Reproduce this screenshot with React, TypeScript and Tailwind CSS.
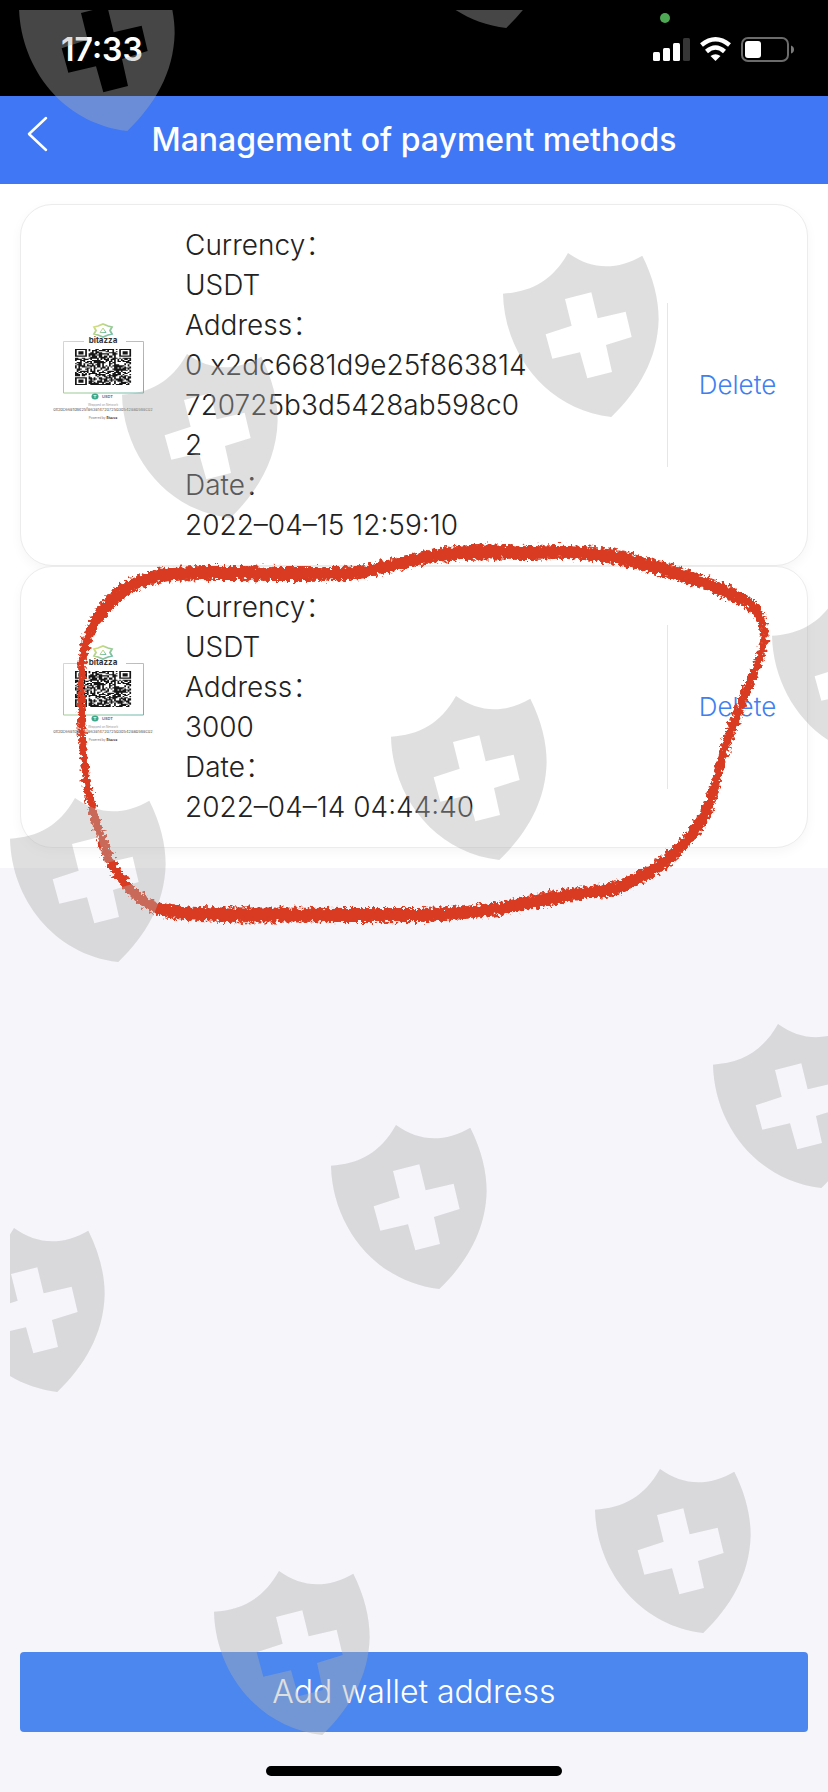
import React from 'react';

interface PaymentMethod {
  currency: string;
  address: string;
  date: string;
}

const METHODS: PaymentMethod[] = [
  {
    currency: 'USDT',
    address: '0 x2dc6681d9e25f863814720725b3d5428ab598c02',
    date: '2022–04–15 12:59:10',
  },
  { currency: 'USDT', address: '3000', date: '2022–04–14 04:44:40' },
];

// Top left corner of every shield in the repeated mark
const SHIELDS = [
  [19, -33],
  [398, -136],
  [503, 253],
  [122, 354],
  [772, 595],
  [391, 696],
  [10, 798],
  [713, 1024],
  [331, 1125],
  [-51, 1228],
  [595, 1469],
  [214, 1571],
];

// x, y and brush width along the marker line
const MARKER = [
  [173, 573, 13], [230, 572, 13], [283, 573, 13], [353, 572, 12], [383, 566, 12], [414, 559, 12],
  [447, 553, 13], [487, 551, 14], [530, 552, 13], [567, 551, 13], [614, 556, 13], [661, 568, 13],
  [701, 581, 12], [734, 595, 12], [751, 605, 10], [762, 624, 7], [763, 641, 7], [756, 664, 7],
  [747, 686, 8], [731, 727, 8], [720, 760, 7], [713, 787, 8], [704, 813, 10], [687, 838, 11],
  [667, 858, 11], [641, 875, 12], [611, 888, 12], [574, 893, 12], [541, 899, 13], [501, 907, 12],
  [457, 912, 12], [414, 914, 13], [350, 914, 13], [267, 914, 14], [200, 913, 13], [163, 909, 12],
  [140, 898, 10], [123, 880, 9], [109, 860, 9], [97, 827, 7], [88, 793, 7], [83, 757, 6],
  [81, 727, 6], [80, 690, 6], [82, 657, 7], [88, 633, 9], [103, 608, 12], [123, 589, 12],
  [147, 578, 12],
];

const spline = (a: number, b: number, c: number, d: number, t: number) =>
  0.5 * (2 * b + (c - a) * t + (2 * a - 5 * b + 4 * c - d) * t * t + (3 * b - a - 3 * c + d) * t * t * t);

const markerPath = () => {
  const n = MARKER.length;
  const outer: string[] = [];
  const inner: string[] = [];
  const at = (i: number, t: number, k: number) =>
    spline(MARKER[(i + n - 1) % n][k], MARKER[i % n][k], MARKER[(i + 1) % n][k], MARKER[(i + 2) % n][k], t);
  for (let i = 0; i < n; i++) {
    for (let s = 0; s < 6; s++) {
      const t = s / 6;
      const x = at(i, t, 0);
      const y = at(i, t, 1);
      const half = at(i, t, 2) / 2;
      const dx = at(i, t + 0.01, 0) - x;
      const dy = at(i, t + 0.01, 1) - y;
      const len = Math.hypot(dx, dy) || 1;
      const nx = (dy / len) * half;
      const ny = (-dx / len) * half;
      outer.push(`${(x + nx).toFixed(1)} ${(y + ny).toFixed(1)}`);
      inner.push(`${(x - nx).toFixed(1)} ${(y - ny).toFixed(1)}`);
    }
  }
  return `M${outer.join('L')}ZM${inner.join('L')}Z`;
};

const QR_SIZE = 33;

const qrPath = () => {
  let seed = 20220415;
  let d = '';
  const finder = (x: number, y: number) => {
    for (const [ox, oy] of [[0, 0], [QR_SIZE - 7, 0], [0, QR_SIZE - 7]]) {
      const fx = x - ox;
      const fy = y - oy;
      if (fx >= -1 && fx <= 7 && fy >= -1 && fy <= 7) {
        const ring = Math.max(Math.abs(fx - 3), Math.abs(fy - 3));
        return ring === 3 || ring <= 1;
      }
    }
    return null;
  };
  for (let y = 0; y < QR_SIZE; y++) {
    for (let x = 0; x < QR_SIZE; x++) {
      seed = (seed * 1103515245 + 12345) % 2147483648;
      const fixed = finder(x, y);
      if (fixed === null ? seed / 2147483648 > 0.42 : fixed) d += `M${x} ${y}h1v1h-1z`;
    }
  }
  return d;
};

const MARKER_PATH = markerPath();
const QR_PATH = qrPath();

const StatusBar: React.FC = () => (
  <div className="flex h-24 flex-none items-start justify-between bg-black pt-2 pr-[34px] pl-[61px] text-white">
    <span className="pt-6 text-[32px] leading-9 font-semibold">17:33</span>
    <svg width="142" height="56" viewBox="652 8 142 56" fill="none" aria-hidden="true">
      <circle cx="665" cy="18" r="5" fill="#4ea954" />
      <g fill="#fff">
        <rect x="653" y="52" width="7" height="9" rx="1.5" />
        <rect x="663" y="48" width="7" height="13" rx="1.5" />
        <rect x="673" y="43" width="7" height="18" rx="1.5" />
        <rect x="683" y="38" width="7" height="23" rx="1.5" fill="#363636" />
        <path d="M715.500 61 L710.500 56 Q715.500 52.500 720.500 56 Z" />
      </g>
      <path d="M701.500 45 Q715.500 33.500 729.500 45" stroke="#fff" strokeWidth="4.500" />
      <path d="M706.500 51.500 Q715.500 43.500 724.500 51.500" stroke="#fff" strokeWidth="4.500" />
      <rect x="742" y="38" width="46" height="23" rx="6" stroke="#6b6b6b" strokeWidth="2" />
      <rect x="745" y="41" width="16" height="17" rx="3" fill="#fff" />
      <path d="M791 45.500 Q794 46.500 794 49.500 Q794 52.500 791 53.500 Z" fill="#7a7a7a" />
    </svg>
  </div>
);

const WalletImage: React.FC<{ id: string }> = ({ id }) => (
  <svg width="110" height="130" viewBox="48 320 110 130" role="img" aria-label="Wallet QR code">
    <defs>
      <linearGradient id={`edge-${id}`} x1="0" y1="0" x2="1" y2="1">
        <stop offset="0" stopColor="#dfe477" />
        <stop offset="1" stopColor="#69b7ae" />
      </linearGradient>
    </defs>
    <g fill="none" stroke={`url(#edge-${id})`}>
      <path d="M84 341.500H63.500V393H143.500V341.500H126" />
      <path d="M98 326L103 324L108 326L112 327L110 330.500L112 334L108 335L103 337L98 335L94 334L96 330.500L94 327Z" strokeWidth="1.800" />
      <path d="M103 328L106 332.500H100Z" />
    </g>
    <text x="103" y="343" textAnchor="middle" fontSize="8" fontWeight="700" fill="#333">bitazza</text>
    <path d={QR_PATH} transform="translate(75 349) scale(1.700 1.090)" fill="#151515" />
    <ellipse cx="95" cy="396.500" rx="3.500" ry="3" fill="#3da78a" />
    <path d="M93.500 395.500h3M95 395.500v2.500" stroke="#fff" strokeWidth=".7" />
    <text x="102" y="398" fontSize="4" fontWeight="600" fill="#666">USDT</text>
    <text x="103" y="406" textAnchor="middle" fontSize="3" fill="#999">Wrapped on Network</text>
    <text x="103" y="411" textAnchor="middle" fontSize="4" fill="#555">0x2dc6681d9e25f863814720725b3d5428ab598c02</text>
    <text x="103" y="419" textAnchor="middle" fontSize="3" fill="#777">Powered by <tspan fontWeight="700" fill="#333">Bitazza</tspan></text>
  </svg>
);

const MethodCard: React.FC<{ method: PaymentMethod; id: string }> = ({ method, id }) => (
  <li className="flex items-center rounded-[32px] border border-[#ececec] bg-white py-5 pl-[27px] shadow-[0_4px_12px_rgba(0,0,0,0.04)]">
    <div className="flex-none">
      <WalletImage id={id} />
    </div>
    <dl className="ml-[27px] w-[346px] text-[28px] leading-10 font-light break-all text-[#222]">
      <dt>Currency：</dt>
      <dd>{method.currency}</dd>
      <dt>Address：</dt>
      <dd>{method.address}</dd>
      <dt>Date：</dt>
      <dd>{method.date}</dd>
    </dl>
    <div className="ml-auto flex h-[164px] w-[140px] flex-none items-center justify-center border-l border-[#e6e6e6]">
      <button type="button" className="text-[26px] leading-9 font-light text-[#3f7ff0]">Delete</button>
    </div>
  </li>
);

const ShieldMarks: React.FC = () => (
  <div className="pointer-events-none absolute top-2.5 right-0 bottom-0 left-2.5 overflow-hidden" aria-hidden="true">
    <svg width="100%" height="100%" fill="#afafaf" fillOpacity="0.4">
      {SHIELDS.map(([x, y]) => (
        <path
          key={`${x}-${y}`}
          transform={`translate(${x - 10} ${y - 10}) scale(.3333) translate(-62 -46)`}
          fillRule="evenodd"
          d="M62 168C145 163 210 130 257 46C325 95 400 100 480 54C513 120 529 185 529 245C526 365 468 460 387 538C190 515 66 345 62 168ZM248 184L327 164L346 242L430 222L448 298L371 322L389 403L315 422L293 344L210 363L190 290L268 264Z"
        />
      ))}
    </svg>
  </div>
);

const MarkerLine: React.FC = () => (
  <svg className="pointer-events-none absolute top-0 left-0" width="828" height="960" aria-hidden="true">
    <defs>
      <filter id="crayon" x="-5%" y="-5%" width="110%" height="110%">
        <feTurbulence type="fractalNoise" baseFrequency="0.28" numOctaves="3" seed="4" result="noise" />
        <feDisplacementMap in="SourceGraphic" in2="noise" scale="10" xChannelSelector="R" yChannelSelector="G" result="rough" />
        <feGaussianBlur in="rough" stdDeviation="0.5" />
      </filter>
    </defs>
    <path
      d={MARKER_PATH}
      fill="#d93a20"
      fillRule="evenodd"
      stroke="#d93a20"
      filter="url(#crayon)"
      transform="translate(1 1)"
    />
  </svg>
);

export default function App() {
  return (
    <div className="relative flex min-h-screen flex-col overflow-hidden bg-[#f5f5fa] font-['Inter','Noto_Sans_CJK_SC',sans-serif]">
      <StatusBar />

      {/* Header */}
      <header className="flex h-[88px] flex-none items-center bg-[#3f77f4] px-6 text-white">
        <button type="button" aria-label="Back" className="w-8 flex-none">
          <svg width="28" height="48" viewBox="0 0 28 48" fill="none" stroke="#fff" strokeWidth="2.500" strokeLinecap="round" strokeLinejoin="round">
            <path d="M22 2L5 18L22 34" />
          </svg>
        </button>
        <h1 className="flex-1 text-center text-[32px] leading-10 font-medium">Management of payment methods</h1>
        <div className="w-8 flex-none" />
      </header>

      {/* Saved methods */}
      <main className="flex-none bg-white p-5">
        <ul>
          {METHODS.map((method, i) => (
            <MethodCard key={method.date} method={method} id={String(i)} />
          ))}
        </ul>
      </main>

      <footer className="mt-auto flex flex-col items-center px-5 pb-4">
        <button type="button" className="h-20 w-full rounded bg-[#4c87ef] text-[32px] font-light text-white">
          Add wallet address
        </button>
        <div className="mt-[34px] h-2.5 w-[296px] rounded-full bg-black" />
      </footer>

      <MarkerLine />
      <ShieldMarks />
    </div>
  );
}
